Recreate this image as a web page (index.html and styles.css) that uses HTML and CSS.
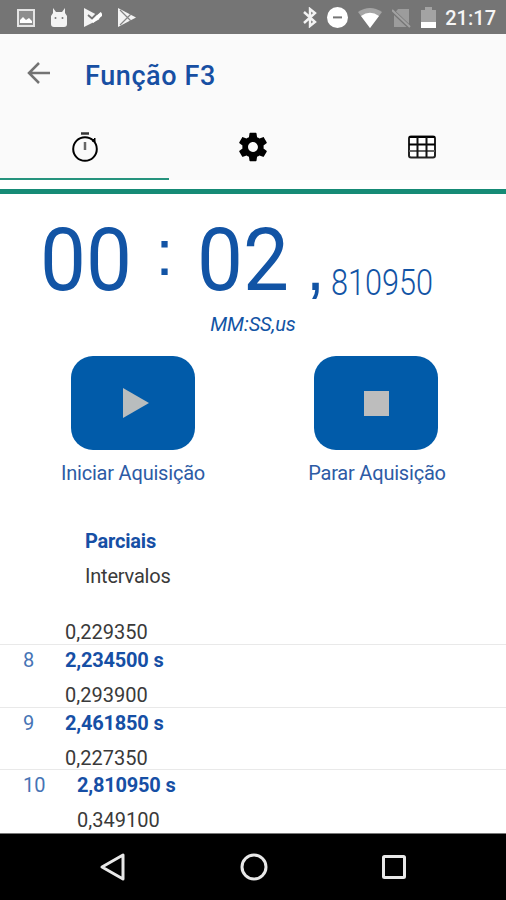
FILE: index.html
```html
<!DOCTYPE html>
<html lang="pt-BR">
<head>
  <meta charset="UTF-8">
  <meta name="viewport" content="width=device-width, initial-scale=1.0">
  <title>Função F3</title>
  <link rel="stylesheet" href="styles.css">
</head>
<body>
  <div class="screen">
    <!-- Status bar -->
    <div class="status-bar">
      <div class="notifications">
        <svg width="18" height="18" viewBox="0 0 18 18"><rect x="1" y="1" width="16" height="16" fill="#8d8d8d" stroke="#e4e4e4" stroke-width="2"/><path d="M3 14v-3l3-3 3 3 3-2 3 3v2z" fill="#fff"/></svg>
        <svg width="18" height="20" viewBox="0 0 18 20"><path d="M3 0l3 4h6l3-4v5l2 3v8q0 3-3 3H4q-3 0-3-3V8l2-3z" fill="#f3f3f3"/><circle cx="5.5" cy="10" r="1" fill="#777"/><circle cx="12.5" cy="10" r="1" fill="#777"/></svg>
        <svg width="19" height="19" viewBox="0 0 19 19"><path d="M1 0l16 8.500-1 3L1 19z" fill="#f3f3f3"/><path d="M9 13.500l10-8" stroke="#fff" stroke-width="4"/><path d="M5 7l4 3.500 6-6" fill="none" stroke="#757575" stroke-width="1.800"/></svg>
        <svg width="20" height="19" viewBox="0 0 20 19"><path d="M1 0l18 9.500L1 19z" fill="#f3f3f3"/><path d="M3 2l11 11M3 17L14 6" stroke="#858585" stroke-width="1.200"/></svg>
      </div>
      <div class="system">
        <svg width="14" height="21" viewBox="0 0 14 21"><path d="M1 5l11 10-5 4V2l5 4L1 16" fill="none" stroke="#f3f3f3" stroke-width="2.400"/></svg>
        <svg width="21" height="21" viewBox="0 0 21 21"><circle cx="10.5" cy="10.5" r="10.5" fill="#fff"/><rect x="6" y="9.400" width="9" height="2" fill="#757575"/></svg>
        <svg width="24" height="20" viewBox="0 0 24 20"><path d="M0 4q12-8 24 0L12 20z" fill="#a5a5a5"/><path d="M3 8q9-6.500 18 0L12 20z" fill="#fff"/></svg>
        <svg width="19" height="20" viewBox="0 0 19 20"><path d="M6 1h11v18H2V6z" fill="#9c9c9c"/><path d="M0 2.500l18 17" stroke="#757575" stroke-width="4"/><path d="M0 2l18 17" stroke="#a2a2a2" stroke-width="2"/></svg>
        <svg width="15" height="21" viewBox="0 0 15 21"><path d="M0 3h4V0h7v3h4v12H0z" fill="#a3a3a3"/><path d="M0 15h15v6H0z" fill="#fff"/></svg>
        <span class="time">21:17</span>
      </div>
    </div>

    <!-- App bar -->
    <header class="app-bar">
      <svg width="24" height="22" viewBox="0 0 24 22"><path d="M12 1L2 11l10 10M2 11h21" fill="none" stroke="#737373" stroke-width="2.500"/></svg>
      <h1>Função F3</h1>
    </header>
    <nav class="tabs">
      <div class="tab active">
        <svg width="28" height="32" viewBox="0 0 28 32"><circle cx="14" cy="18" r="11.800" fill="none" stroke="#000" stroke-width="2"/><path d="M10 2.500h8" stroke="#333" stroke-width="2.500"/><path d="M14 11v8" stroke="#666" stroke-width="2.500"/><path d="M21 10l3-3v4z" fill="#000" stroke="#000"/></svg>
      </div>
      <div class="tab">
        <svg width="34" height="34" viewBox="0 0 24 24"><path d="M19.430 12.980c.04-.32.07-.64.07-.98s-.03-.66-.07-.98l2.110-1.650c.19-.15.24-.42.12-.64l-2-3.460c-.12-.22-.39-.3-.61-.22l-2.490 1c-.52-.4-1.080-.73-1.690-.98l-.38-2.650C14.460 2.180 14.250 2 14 2h-4c-.25 0-.46.18-.49.42l-.38 2.650c-.61.25-1.170.59-1.690.98l-2.490-1c-.23-.09-.49 0-.61.22l-2 3.460c-.13.22-.07.49.12.64l2.110 1.650c-.04.32-.07.65-.07.98s.03.66.07.98l-2.110 1.650c-.19.15-.24.42-.12.64l2 3.460c.12.22.39.3.61.22l2.490-1c.52.4 1.080.73 1.690.98l.38 2.650c.03.24.24.42.49.42h4c.25 0 .46-.18.49-.42l.38-2.650c.61-.25 1.170-.59 1.690-.98l2.490 1c.23.09.49 0 .61-.22l2-3.460c.12-.22.07-.49-.12-.64l-2.110-1.650zM12 15.500c-1.930 0-3.500-1.570-3.500-3.500s1.570-3.500 3.500-3.500 3.500 1.570 3.500 3.500-1.570 3.500-3.500 3.500z"/></svg>
      </div>
      <div class="tab">
        <svg width="28" height="24" viewBox="0 0 28 24"><rect x="1" y="1.500" width="26" height="21" rx="2" fill="#fff" stroke="#222" stroke-width="2"/><path d="M1 2h26M1 9.500h26" stroke="#000" stroke-width="2"/><path d="M1 16h26" stroke="#555" stroke-width="1.800"/><path d="M9.500 2v20M18.500 2v20" stroke="#111" stroke-width="2"/></svg>
      </div>
    </nav>
    <div class="divider"></div>

    <!-- Timer -->
    <section class="timer">
      <svg class="clock" width="506" height="117" viewBox="0 0 506 117">
        <text class="big" x="40" y="96" textLength="92" lengthAdjust="spacingAndGlyphs">00</text>
        <text class="colon" x="164.500" y="81">:</text>
        <text class="big" x="197" y="96" textLength="92" lengthAdjust="spacingAndGlyphs">02</text>
        <text class="comma" x="306" y="96">,</text>
        <text class="micro" x="331" y="101" textLength="102" lengthAdjust="spacingAndGlyphs">810950</text>
      </svg>
      <div class="format">MM:SS,us</div>
    </section>

    <section class="actions">
      <div class="action">
        <button type="button"><svg width="28" height="30" viewBox="0 0 28 30"><path d="M1 0l26 15L1 30z" fill="#b9bdbe"/></svg></button>
        <span>Iniciar Aquisição</span>
      </div>
      <div class="action">
        <button type="button" class="stop"><svg width="25" height="25" viewBox="0 0 25 25"><rect width="25" height="25" fill="#bdbdbd"/></svg></button>
        <span>Parar Aquisição</span>
      </div>
    </section>

    <!-- Laps -->
    <section class="laps">
      <div class="legend">
        <b>Parciais</b>
        <span>Intervalos</span>
      </div>
      <div class="lap first"><div class="values"><span>0,229350</span></div></div>
      <div class="lap"><i>8</i><div class="values"><b>2,234500 s</b><span>0,293900</span></div></div>
      <div class="lap"><i>9</i><div class="values"><b>2,461850 s</b><span>0,227350</span></div></div>
      <div class="lap wide"><i>10</i><div class="values"><b>2,810950 s</b><span>0,349100</span></div></div>
    </section>

    <!-- Navigation bar -->
    <footer class="nav-bar">
      <svg width="28" height="30" viewBox="0 0 28 30"><path d="M24 3v24L3 15z" fill="none" stroke="#e8e8e8" stroke-width="3" stroke-linejoin="round"/></svg>
      <svg width="28" height="28" viewBox="0 0 28 28"><circle cx="14" cy="14" r="12" fill="none" stroke="#e8e8e8" stroke-width="3"/></svg>
      <svg width="26" height="26" viewBox="0 0 26 26"><rect x="2.500" y="2.500" width="21" height="21" rx="1" fill="none" stroke="#e8e8e8" stroke-width="3"/></svg>
    </footer>
  </div>
</body>
</html>
```

FILE: styles.css
```css
* {
  box-sizing: border-box;
}
body {
  margin: 0;
  font-family: Roboto, sans-serif;
  background: #fff;
}
svg {
  display: block;
  flex-shrink: 0;
}
.screen {
  width: 506px;
  height: 900px;
  display: flex;
  flex-direction: column;
  overflow: hidden;
}
.status-bar {
  height: 34px;
  background: #757575;
  display: flex;
  justify-content: space-between;
  align-items: center;
  padding: 1px 10px 0 17px;
}
.notifications {
  display: flex;
  align-items: center;
  gap: 15px;
}
.system {
  display: flex;
  align-items: center;
  gap: 10px;
}
.time {
  margin-left: -1px;
  color: #f5f5f5;
  font-size: 20px;
  font-weight: 500;
  line-height: 20px;
}
.app-bar {
  height: 82px;
  background: #fafafa;
  display: flex;
  align-items: center;
  gap: 34px;
  padding: 0 27px 5px;
}
.app-bar h1 {
  margin: 7px 0 0;
  font-size: 27px;
  font-weight: 500;
  line-height: 32px;
  letter-spacing: 0.6px;
  color: #174fa3;
}
.tabs {
  height: 64px;
  background: #fafafa;
  display: grid;
  grid-template-columns: repeat(3, 1fr);
}
.tab {
  display: flex;
  justify-content: center;
  align-items: center;
  padding-left: 1px;
  border-bottom: 2px solid transparent;
}
.tab.active {
  border-bottom-color: #26937d;
}
.divider {
  height: 5px;
  margin-top: 9px;
  background: #168b76;
}
.timer {
  color: #1254a5;
}
.clock {
  fill: #1254a5;
}
.big {
  font-size: 87px;
}
.colon {
  font-family: "Liberation Sans", sans-serif;
  font-size: 65px;
  text-anchor: middle;
}
.comma {
  font-family: "Liberation Sans", sans-serif;
  font-size: 68px;
}
.micro {
  font-size: 36px;
  font-weight: 300;
}
.format {
  text-align: center;
  font-size: 20px;
  line-height: 26px;
  letter-spacing: -0.1px;
  font-style: italic;
}
.actions {
  display: flex;
  justify-content: space-between;
  padding: 19px 48px 0 52px;
}
.action {
  width: 162px;
  display: flex;
  flex-direction: column;
  align-items: center;
  color: #2d5ba5;
  font-size: 20px;
  line-height: 24px;
  letter-spacing: -0.2px;
}
.action button {
  width: 124px;
  height: 94px;
  margin-bottom: 11px;
  padding: 0 0 0 6px;
  display: flex;
  justify-content: center;
  align-items: center;
  border: none;
  border-radius: 22px;
  background: #015ba9;
}
.action .stop {
  padding: 0;
  margin-right: 2px;
}
.laps {
  flex: 1;
  padding-top: 44px;
  font-size: 20px;
  line-height: 24px;
  color: #3a3a3a;
}
.laps b {
  font-weight: 700;
  letter-spacing: -0.2px;
  color: #164fa5;
}
.legend {
  height: 91px;
  padding-left: 85px;
  display: flex;
  flex-direction: column;
  gap: 11px;
  letter-spacing: -0.2px;
}
.lap {
  height: 62.5px;
  display: flex;
  padding-left: 23px;
  border-top: 1px solid #e9e9e9;
}
.lap.first {
  height: 24px;
  border-top: none;
}
.lap i {
  width: 42px;
  font-style: normal;
  color: #4674b5;
  padding-top: 3px;
}
.lap.first .values {
  padding: 0 0 0 42px;
}
.lap.wide i {
  width: 54px;
}
.values {
  display: flex;
  flex-direction: column;
  gap: 11px;
  padding-top: 3px;
}
.nav-bar {
  height: 67px;
  background: #000;
  border-top: 1px solid #777;
  display: flex;
  justify-content: space-between;
  align-items: center;
  padding: 0 99px;
}
```
